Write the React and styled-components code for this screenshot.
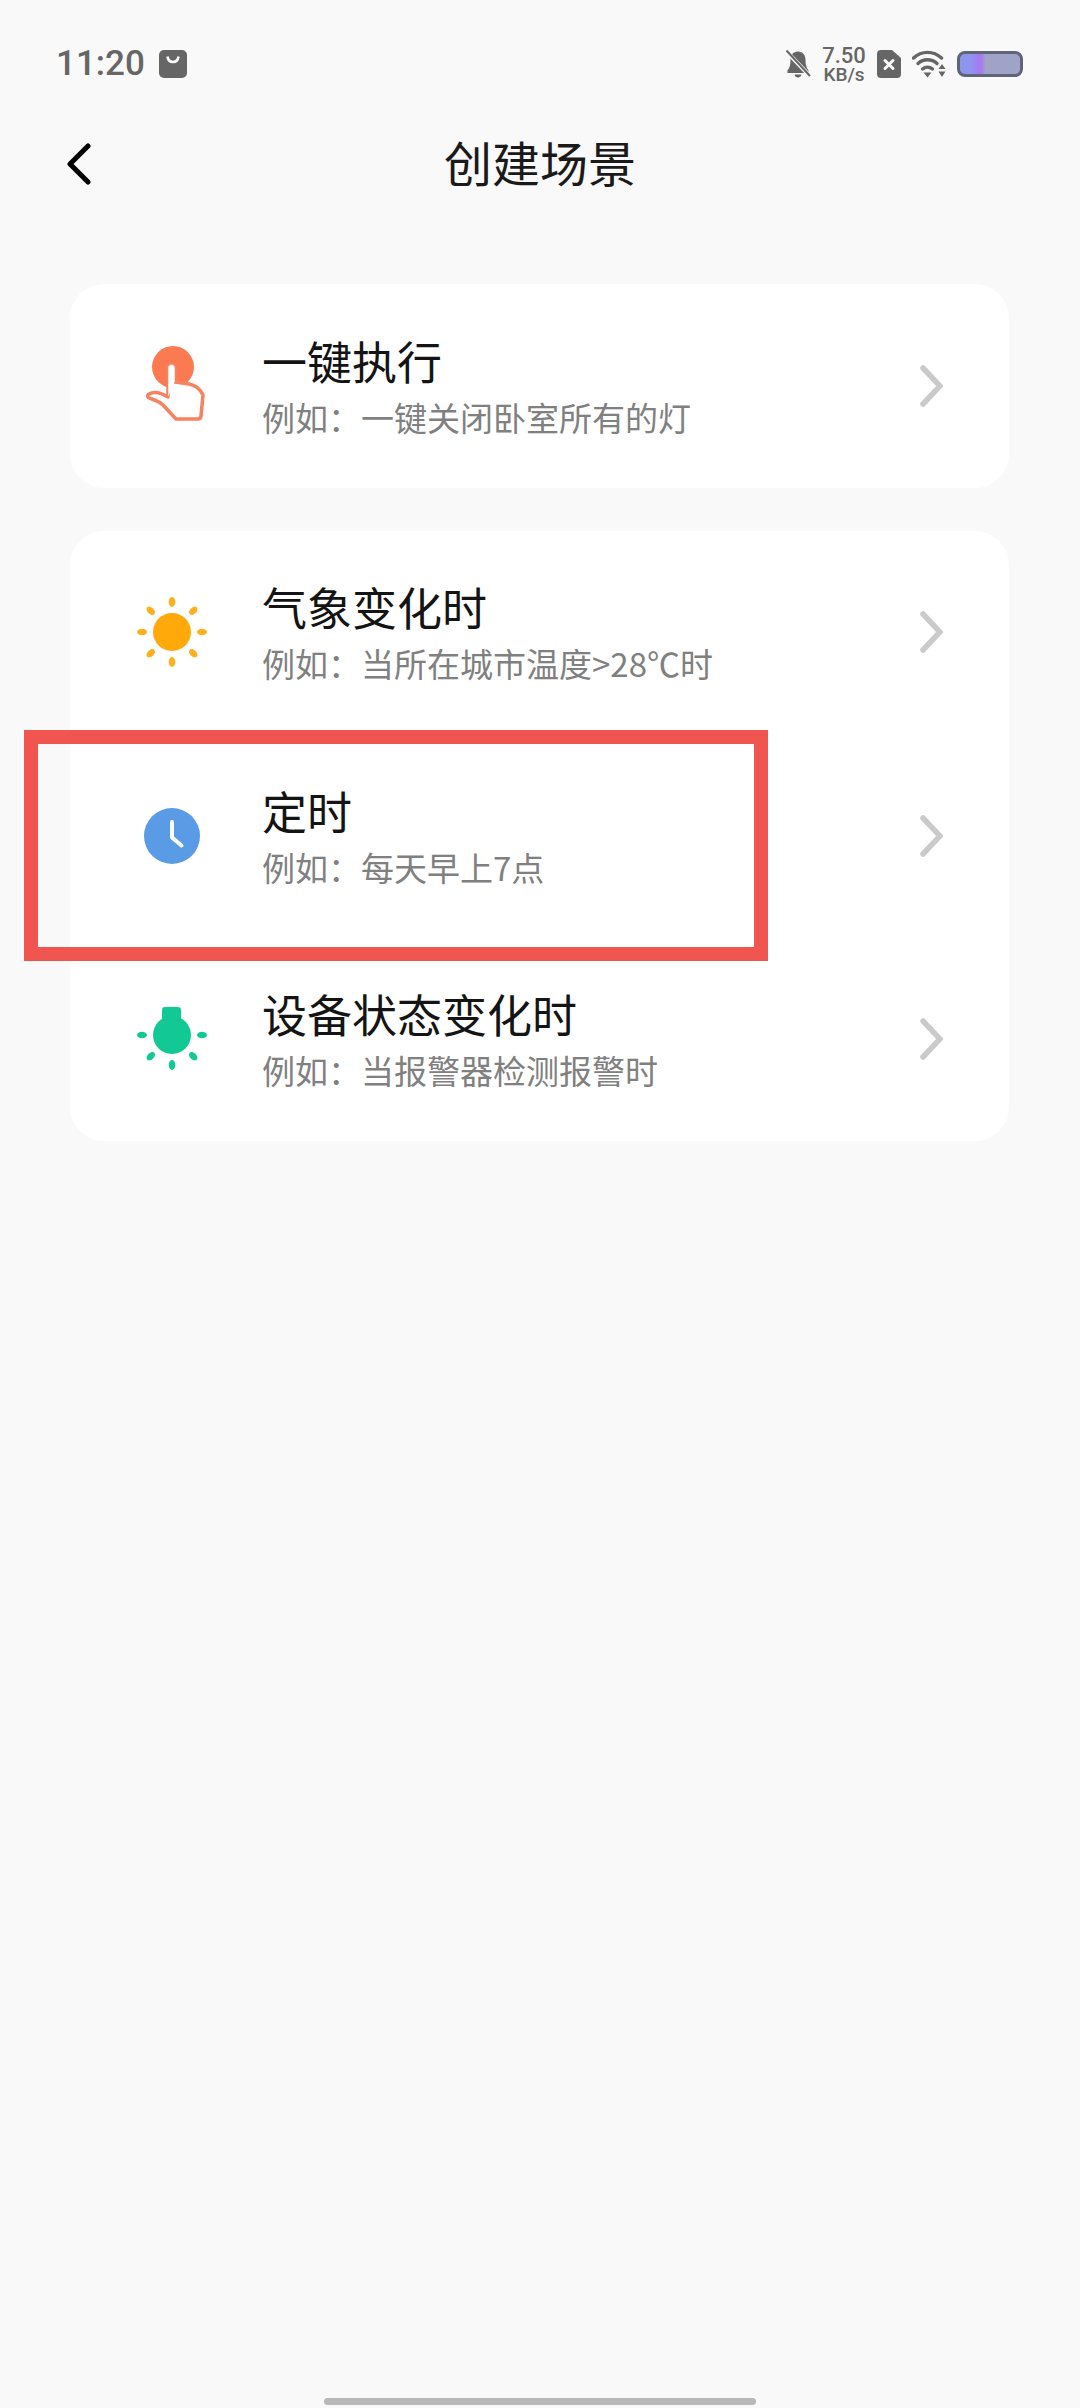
import React from 'react';
import styled, { createGlobalStyle } from 'styled-components';

const Global = createGlobalStyle`
  html, body { margin: 0; padding: 0; background: #f9f9f9; }
  * { box-sizing: border-box; }
`;

const Page = styled.div`
  position: relative;
  width: 1080px;
  height: 2408px;
  background: #f9f9f9;
  display: flex;
  flex-direction: column;
  font-family: "Noto Sans CJK SC", "Noto Sans", sans-serif;
  overflow: hidden;
`;

const StatusBar = styled.div`
  height: 64px;
  margin-top: 32px;
  padding: 0 57px 0 56px;
  display: flex;
  align-items: center;
  justify-content: space-between;
  color: #666;
`;

const StatusGroup = styled.div`
  display: flex;
  align-items: center;
  gap: ${p => p.$gap}px;
`;

const Clock = styled.span`
  font-family: Roboto, sans-serif;
  font-size: 35px;
  font-weight: 500;
  line-height: 64px;
`;

const Speed = styled.div`
  display: flex;
  flex-direction: column;
  align-items: center;
  font-family: Roboto, sans-serif;
  font-weight: 500;
  width: 44px;
`;

const SpeedValue = styled.span`
  font-size: 22px;
  line-height: 21px;
`;

const SpeedUnit = styled.span`
  font-size: 19px;
  line-height: 17px;
`;

const Battery = styled.div`
  width: 66px;
  height: 26px;
  border-radius: 8px;
  border: 3px solid #5f6478;
  background: linear-gradient(90deg, #8f95e8 0%, #8f95f0 18%, #a37cf0 30%, #a37cf0 36%, #a0a2c8 42%, #a0a2c8 100%);
`;

const Header = styled.header`
  position: relative;
  height: 80px;
  margin-top: 25px;
  display: flex;
  align-items: center;
  justify-content: center;
`;

const BackButton = styled.div`
  position: absolute;
  left: 66px;
  top: 22px;
  width: 26px;
  height: 42px;
`;

const Title = styled.h1`
  margin: 0;
  font-size: 48px;
  font-weight: 400;
  color: #1a1a1a;
  line-height: 80px;
`;

const Cards = styled.main`
  margin-top: 83px;
  padding: 0 71px 0 70px;
  display: flex;
  flex-direction: column;
  gap: 43px;
`;

const Card = styled.section`
  background: #fff;
  border-radius: 34px;
  display: flex;
  flex-direction: column;
`;

const Row = styled.div`
  height: 203.5px;
  padding: 0 66px 0 62px;
  display: flex;
  align-items: center;
`;

const IconSlot = styled.div`
  width: 80px;
  height: 80px;
  flex: none;
  margin-right: 50px;
`;

const Texts = styled.div`
  flex: 1;
  display: flex;
  flex-direction: column;
`;

const RowTitle = styled.div`
  font-size: 45px;
  line-height: 58px;
  color: #141414;
`;

const RowSub = styled.div`
  font-size: 33px;
  line-height: 50px;
  margin-top: 2px;
  margin-bottom: -2px;
  color: #808080;
`;

const Highlight = styled.div`
  position: absolute;
  left: 24px;
  top: 730px;
  width: 744px;
  height: 231px;
  border: 14px solid #f0554f;
`;

const HomeBar = styled.div`
  position: absolute;
  left: 324px;
  bottom: 3px;
  width: 432px;
  height: 7px;
  border-radius: 4px;
  background: #b8b8b8;
`;

const BagIcon = () => (
  <svg width="28" height="28" viewBox="0 0 28 28">
    <rect width="28" height="28" rx="5" fill="#666" />
    <path d="M8.500 6.500c.6 4 3 5.500 5.500 5.500s4.900-1.500 5.500-5.500" fill="none" stroke="#f9f9f9" strokeWidth="2.600" />
  </svg>
);

const BellIcon = () => (
  <svg width="26" height="30" viewBox="0 0 26 30">
    <path d="M13 2.500c4.800 0 7.500 3.500 7.500 8.500 0 5 1 8 3 10.500v2.500H2.500v-2.500c2-2.500 3-5.500 3-10.500 0-5 2.700-8.500 7.500-8.500zM9.500 25.500h7c-.4 2-1.700 3-3.500 3s-3.100-1-3.500-3z" fill="#666" />
    <path d="M1.500 2.500L25 27" stroke="#f9f9f9" strokeWidth="4" />
    <path d="M1.500 1.500L25 27" stroke="#666" strokeWidth="2" />
  </svg>
);

const SimIcon = () => (
  <svg width="24" height="28" viewBox="0 0 24 28">
    <path d="M4 0h11l9 8v16a4 4 0 0 1-4 4H4a4 4 0 0 1-4-4V4a4 4 0 0 1 4-4z" fill="#666" />
    <path d="M8 10.500l8 8M16 10.500l-8 8" stroke="#f9f9f9" strokeWidth="3" strokeLinecap="round" />
  </svg>
);

const WifiIcon = () => (
  <svg width="34" height="28" viewBox="0 0 34 28">
    <path d="M1.500 8C9.500 0.500 21.500 0.500 29.500 8" fill="none" stroke="#666" strokeWidth="3.400" strokeLinecap="round" />
    <path d="M6 13.500c5.500-5 13.500-5 19 0" fill="none" stroke="#666" strokeWidth="3.400" strokeLinecap="round" />
    <path d="M10.500 19c3-2.500 7-2.500 10 0" fill="none" stroke="#666" strokeWidth="3.400" strokeLinecap="round" />
    <path d="M11.500 22.500h8l-4 5z" fill="#666" />
    <path d="M30 14l3.500 5h-7zM26.500 21.500h7L30 27z" fill="#666" />
  </svg>
);

const TapIcon = () => (
  <svg width="80" height="80" viewBox="0 0 80 80">
    <circle cx="41" cy="21" r="21" fill="#fb7a51" />
    <path d="M36 51V21.500c0-4 7-4 7 0V36l14 2c6 1 11 5 14 11L69 70q-.3 3-3 3H44L31 59c-4-4-9-5-14-7-2-1-2-3 0-4 5-3 11-2 19 3z" fill="#fff" stroke="#f6825f" strokeWidth="3.500" strokeLinejoin="round" />
    <path d="M36.500 50V21.500c0-3.500 6-3.500 6 0V36" fill="#fff" stroke="#fff" strokeWidth="0.500" />
  </svg>
);

const rayAngles = [0, 45, 90, 135, 180, 225, 270, 315];

const SunIcon = () => (
  <svg width="80" height="80" viewBox="0 0 80 80">
    <circle cx="40" cy="40" r="19" fill="#ffa90a" />
    {rayAngles.map(a => (
      <ellipse key={a} cx="40" cy="10" rx="3.300" ry="5" fill="#ffb01f" transform={`rotate(${a} 40 40)`} />
    ))}
  </svg>
);

const ClockIcon = () => (
  <svg width="80" height="80" viewBox="0 0 80 80">
    <circle cx="40" cy="40" r="28" fill="#5a9be6" />
    <path d="M40 26v15.500l9.500 8" fill="none" stroke="#fff" strokeWidth="4" strokeLinecap="round" strokeLinejoin="round" />
  </svg>
);

const BulbIcon = () => (
  <svg width="80" height="80" viewBox="0 0 80 80">
    <path d="M33 8h13a3 3 0 0 1 3 3v13H30V11a3 3 0 0 1 3-3z" fill="#12c996" />
    <circle cx="40" cy="36" r="19" fill="#12c996" />
    {[90, 135, 180, 225, 270].map(a => (
      <ellipse key={a} cx="40" cy="6" rx="3.300" ry="5" fill="#12c996" transform={`rotate(${a} 40 36)`} />
    ))}
  </svg>
);

const Chevron = () => (
  <svg width="24" height="42" viewBox="0 0 24 42" style={{ flex: 'none' }}>
    <path d="M4 3l17 18L4 39" fill="none" stroke="#cacaca" strokeWidth="5.500" strokeLinecap="round" />
  </svg>
);

const items = [
  [{ Icon: TapIcon, title: '一键执行', sub: '例如：一键关闭卧室所有的灯' }],
  [
    { Icon: SunIcon, title: '气象变化时', sub: '例如：当所在城市温度>28℃时' },
    { Icon: ClockIcon, title: '定时', sub: '例如：每天早上7点' },
    { Icon: BulbIcon, title: '设备状态变化时', sub: '例如：当报警器检测报警时' },
  ],
];

export default function App() {
  return (
    <Page>
      <Global />
      <StatusBar>
        <StatusGroup $gap={14}>
          <Clock>11:20</Clock>
          <BagIcon />
        </StatusGroup>
        <StatusGroup $gap={11}>
          <BellIcon />
          <Speed>
            <SpeedValue>7.50</SpeedValue>
            <SpeedUnit>KB/s</SpeedUnit>
          </Speed>
          <SimIcon />
          <WifiIcon />
          <Battery />
        </StatusGroup>
      </StatusBar>
      <Header>
        <BackButton>
          <svg width="26" height="42" viewBox="0 0 26 42">
            <path d="M22 3L4 21l18 18" fill="none" stroke="#000" strokeWidth="5" strokeLinecap="round" strokeLinejoin="round" />
          </svg>
        </BackButton>
        <Title>创建场景</Title>
      </Header>
      <Cards>
        {items.map((group, i) => (
          <Card key={i}>
            {group.map(({ Icon, title, sub }) => (
              <Row key={title}>
                <IconSlot><Icon /></IconSlot>
                <Texts>
                  <RowTitle>{title}</RowTitle>
                  <RowSub>{sub}</RowSub>
                </Texts>
                <Chevron />
              </Row>
            ))}
          </Card>
        ))}
      </Cards>
      <Highlight />
      <HomeBar />
    </Page>
  );
}
